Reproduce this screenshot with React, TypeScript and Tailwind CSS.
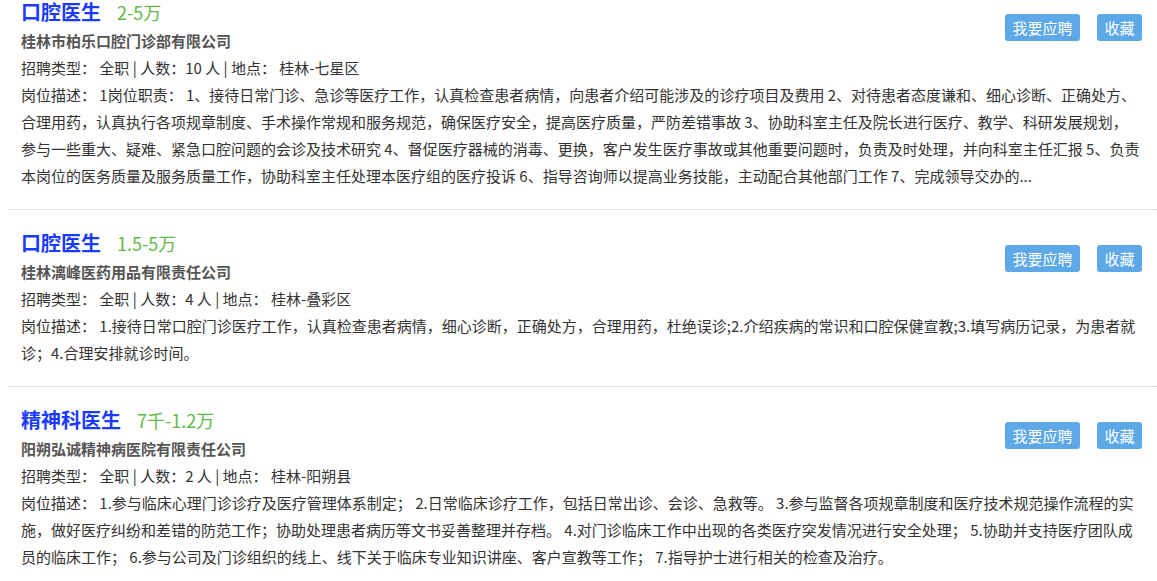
import React from "react";

const jobs = [
  {
    title: "口腔医生",
    salary: "2-5万",
    company: "桂林市柏乐口腔门诊部有限公司",
    count: "10",
    place: "桂林-七星区",
    desc: "1岗位职责： 1、接待日常门诊、急诊等医疗工作，认真检查患者病情，向患者介绍可能涉及的诊疗项目及费用 2、对待患者态度谦和、细心诊断、正确处方、合理用药，认真执行各项规章制度、手术操作常规和服务规范，确保医疗安全，提高医疗质量，严防差错事故 3、协助科室主任及院长进行医疗、教学、科研发展规划，参与一些重大、疑难、紧急口腔问题的会诊及技术研究 4、督促医疗器械的消毒、更换，客户发生医疗事故或其他重要问题时，负责及时处理，并向科室主任汇报 5、负责本岗位的医务质量及服务质量工作，协助科室主任处理本医疗组的医疗投诉 6、指导咨询师以提高业务技能，主动配合其他部门工作 7、完成领导交办的...",
  },
  {
    title: "口腔医生",
    salary: "1.5-5万",
    company: "桂林漓峰医药用品有限责任公司",
    count: "4",
    place: "桂林-叠彩区",
    desc: "1.接待日常口腔门诊医疗工作，认真检查患者病情，细心诊断，正确处方，合理用药，杜绝误诊;2.介绍疾病的常识和口腔保健宣教;3.填写病历记录，为患者就诊；4.合理安排就诊时间。",
  },
  {
    title: "精神科医生",
    salary: "7千-1.2万",
    company: "阳朔弘诚精神病医院有限责任公司",
    count: "2",
    place: "桂林-阳朔县",
    desc: "1.参与临床心理门诊诊疗及医疗管理体系制定； 2.日常临床诊疗工作，包括日常出诊、会诊、急救等。 3.参与监督各项规章制度和医疗技术规范操作流程的实施，做好医疗纠纷和差错的防范工作；协助处理患者病历等文书妥善整理并存档。 4.对门诊临床工作中出现的各类医疗突发情况进行安全处理； 5.协助并支持医疗团队成员的临床工作； 6.参与公司及门诊组织的线上、线下关于临床专业知识讲座、客户宣教等工作； 7.指导护士进行相关的检查及治疗。",
  },
];

export default function App() {
  return (
    <div className="w-[1157px] h-[581px] overflow-hidden bg-white font-['Microsoft_YaHei','Noto_Sans_CJK_SC',sans-serif] text-[15px] text-[#333]">
      <div className="pl-[8px] -mt-[21px]">
        {jobs.map((job, i) => (
          <div key={i} className="border-b border-dotted border-[#c8c8c8] pl-[13px] pr-[15px] pt-[18px] pb-[20px]">
            <div className="flex justify-between">
              <div>
                <div className="h-[30px] flex items-center">
                  <span className="text-[20px] font-bold text-[#1a3bff] leading-[20px]">{job.title}</span>
                  <span className="ml-[16px] text-[18px] text-[#5fba46] leading-[20px]">{job.salary}</span>
                </div>
                <div className="leading-[27px] font-bold text-[#555]">{job.company}</div>
                <div className="leading-[27px]">
                  {`招聘类型： 全职 | 人数：${job.count} 人 | 地点： ${job.place}`}
                </div>
              </div>
              <div className="flex gap-[17px] mt-[17px] self-start">
                <button className="w-[75px] h-[27px] rounded-[3px] bg-[#5da8e7] text-white text-[15px] leading-[27px]">我要应聘</button>
                <button className="w-[45px] h-[27px] rounded-[3px] bg-[#5da8e7] text-white text-[15px] leading-[27px]">收藏</button>
              </div>
            </div>
            <p className="leading-[27px]">{`岗位描述： ${job.desc}`}</p>
          </div>
        ))}
      </div>
    </div>
  );
}
